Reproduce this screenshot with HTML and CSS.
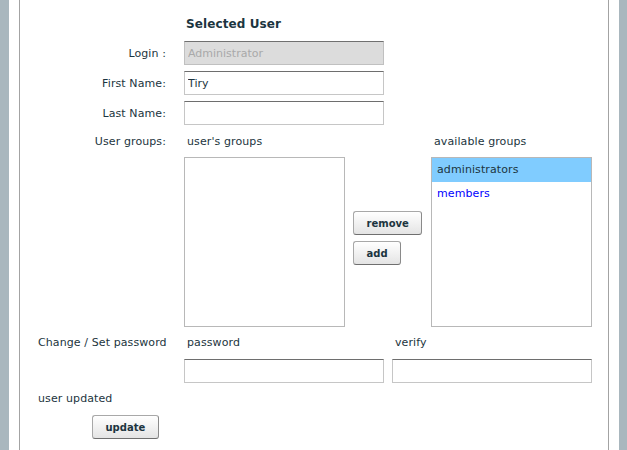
FILE: index.html
```html
<!DOCTYPE html>
<html>
<head>
<meta charset="utf-8">
<link rel="stylesheet" href="styles.css">
</head>
<body>
<div class="page">
  <div class="panel">
    <h2 class="title">Selected User</h2>
    <div class="form">
      <div class="row">
        <div class="label">Login :</div>
        <div class="field"><input class="text disabled" type="text" value="Administrator" disabled></div>
      </div>
      <div class="row">
        <div class="label">First Name:</div>
        <div class="field"><input class="text" type="text" value="Tiry"></div>
      </div>
      <div class="row">
        <div class="label">Last Name:</div>
        <div class="field"><input class="text" type="text" value=""></div>
      </div>
      <div class="row top groups-row">
        <div class="label cap">User groups:</div>
        <div class="field groups">
          <div class="group-col">
            <div class="cap sub">user's groups</div>
            <div class="listbox"></div>
          </div>
          <div class="group-buttons">
            <button class="btn">remove</button>
            <button class="btn">add</button>
          </div>
          <div class="group-col">
            <div class="cap sub">available groups</div>
            <div class="listbox">
              <div class="item selected">administrators</div>
              <div class="item link">members</div>
            </div>
          </div>
        </div>
      </div>
      <div class="row top pw-row">
        <div class="label cap">Change / Set password</div>
        <div class="field pw">
          <div class="pw-col">
            <div class="cap sub">password</div>
            <input class="text" type="password" value="">
          </div>
          <div class="pw-col">
            <div class="cap sub">verify</div>
            <input class="text" type="password" value="">
          </div>
        </div>
      </div>
      <div class="message cap">user updated</div>
      <div class="actions"><button class="btn">update</button></div>
    </div>
  </div>
</div>
</body>
</html>
```
FILE: styles.css
```css
html, body {
  margin: 0;
  padding: 0;
  background: #a9b7be;
  height: 100%;
  overflow: hidden;
}
body {
  font-family: "DejaVu Sans", Verdana, sans-serif;
  font-size: 11px;
  color: #1c3540;
  letter-spacing: 0.1px;
}
.page {
  margin-left: 9px;
  width: 590px;
  padding: 0 10px;
  background: #fff;
  min-height: 100%;
}
.panel {
  border-left: 1px solid #a3a3a3;
  border-right: 1px solid #a3a3a3;
  min-height: 450px;
  padding-top: 16px;
  box-sizing: border-box;
}
.title {
  margin: 0 0 9px 166px;
  font-size: 12px;
  line-height: 16px;
  font-weight: bold;
  color: #1c3540;
}
.form {
  padding-left: 18px;
}
.row {
  display: flex;
  align-items: center;
  margin-bottom: 6px;
}
.row.top {
  align-items: flex-start;
}
.label {
  width: 128px;
  text-align: right;
  margin-right: 18px;
  white-space: nowrap;
  flex: none;
}
.cap {
  line-height: 14px;
  height: 14px;
}
.sub {
  padding-left: 3px;
  margin-bottom: 8px;
}
.pw .sub {
  margin-bottom: 9px;
}
.text {
  box-sizing: border-box;
  width: 200px;
  height: 24px;
  margin: 0;
  padding: 0 3px;
  border: 1px solid #c6c6c6;
  border-top-color: #6e6e6e;
  background: #fff;
  font-family: "DejaVu Sans", Verdana, sans-serif;
  font-size: 11px;
  color: #1c3540;
  outline: none;
  display: block;
}
.text.disabled {
  background: #dcdcdc;
  color: #a9a9a9;
  border-color: #c0c0c0;
  border-top-color: #707070;
}
.groups-row {
  margin-top: 10px;
  margin-bottom: 9px;
}
.groups {
  display: flex;
  align-items: flex-start;
}
.group-col {
  width: 161px;
}
.listbox {
  box-sizing: border-box;
  width: 161px;
  height: 170px;
  border: 1px solid #b8b8b8;
  background: #fff;
}
.item {
  height: 24px;
  line-height: 24px;
  padding-left: 5px;
}
.item.selected {
  background: #80ccff;
  color: #1c3540;
}
.item.link {
  color: #0000ff;
}
.group-buttons {
  width: 70px;
  margin: 76px 8px 0;
  display: flex;
  flex-direction: column;
  align-items: flex-start;
  gap: 6px;
}
.btn {
  box-sizing: border-box;
  height: 24px;
  margin: 0;
  padding: 0 12.5px;
  border: 1px solid #a8a8a8;
  border-bottom-color: #6f6f6f;
  border-right-color: #8a8a8a;
  border-radius: 3px;
  background: linear-gradient(#ffffff, #e4e4e4);
  font-family: "DejaVu Sans", Verdana, sans-serif;
  font-size: 10px;
  font-weight: bold;
  color: #1c3540;
  cursor: pointer;
}
.pw-row {
  margin-bottom: 9px;
}
.pw {
  display: flex;
  gap: 8px;
}
.pw-col {
  width: 200px;
}
.message {
  margin-bottom: 9px;
}
.actions {
  padding-left: 54px;
}
```
